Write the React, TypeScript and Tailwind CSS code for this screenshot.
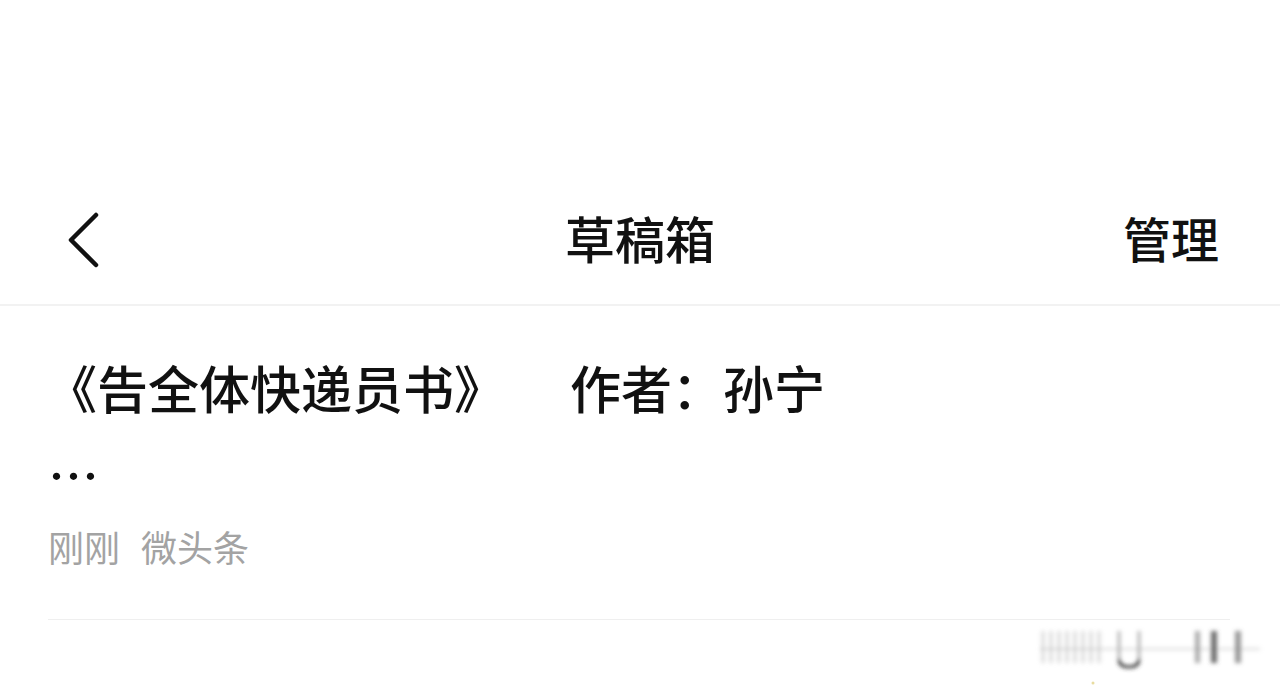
import React from "react";

function Watermark() {
  return (
    <svg
      className="absolute left-[1035px] top-[625px]"
      width="235"
      height="60"
      viewBox="0 0 235 60"
    >
      <defs>
        <filter id="wb" x="-10%" y="-30%" width="120%" height="160%">
          <feGaussianBlur stdDeviation="2" />
        </filter>
      </defs>
      <g filter="url(#wb)">
        {[6, 14, 22, 30, 38, 46, 54, 62].map((x, i) => (
          <rect key={i} x={x} y={6} width={4} height={32} fill="#cfcfcf" opacity={0.65} />
        ))}
        <line x1="5" y1="24" x2="225" y2="24" stroke="#b5b5b5" strokeWidth="1.2" />
        <path d="M84 6 L84 34 Q84 42 94 42 Q104 42 104 34 L104 6" fill="none" stroke="#a5a5a5" strokeWidth="2.5" />
        <path d="M84 34 Q84 42 94 42 Q104 42 104 34" fill="none" stroke="#222" strokeWidth="2.5" />
        <rect x="160" y="6" width="5" height="32" fill="#888" opacity={0.7} />
        <rect x="176" y="6" width="6" height="32" fill="#555" opacity={0.85} />
        <rect x="200" y="6" width="6" height="32" fill="#777" opacity={0.75} />
      </g>
      <circle cx="58" cy="58" r="1.5" fill="#e8dca0" />
    </svg>
  );
}

export default function App() {
  return (
    <div className="relative w-[1280px] h-[686px] overflow-hidden bg-white font-['Noto_Sans_CJK_SC',sans-serif] text-[#111]">
      <div className="pt-[170px]">
        <header className="relative flex h-[136px] items-center justify-between border-b-2 border-[#f2f2f2] pl-[66px] pr-[61px]">
          <svg className="mt-[6px]" width="34" height="56" viewBox="0 0 34 56">
            <path d="M30 3 L5 28 L30 53" fill="none" stroke="#111" strokeWidth="4.5" strokeLinecap="round" strokeLinejoin="round" />
          </svg>
          <div className="absolute left-0 right-0 text-center text-[50px] leading-[50px] font-medium pointer-events-none">草稿箱</div>
          <div className="text-[48px] leading-[48px] font-medium">管理</div>
        </header>
        <section className="pl-12">
          <div className="mt-[56px] flex text-[51px] leading-[51px] font-medium whitespace-nowrap -ml-[2px]">
            <span>《告全体快递员书》</span>
            <span className="ml-[65px]">作者：孙宁</span>
          </div>
          <div className="mt-[36px] text-[51px] leading-[51px] font-medium">…</div>
          <div className="mt-[28px] flex text-[36px] leading-[36px] text-[#a3a3a3]">
            <span>刚刚</span>
            <span className="ml-[21px]">微头条</span>
          </div>
        </section>
        <div className="mt-[55px] ml-12 mr-[50px] border-t border-[#efefef]" />
      </div>
      <Watermark />
    </div>
  );
}
